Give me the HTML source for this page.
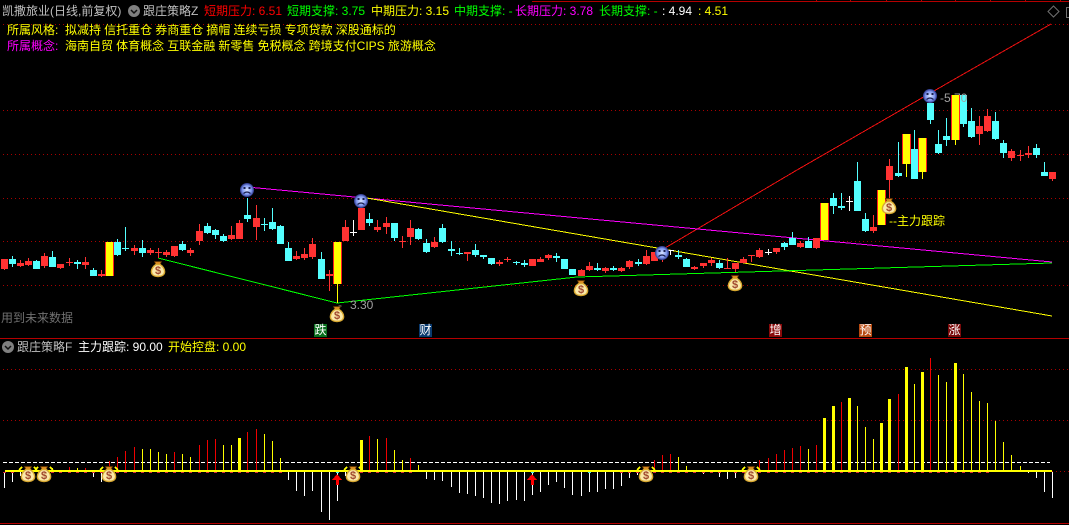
<!DOCTYPE html>
<html><head><meta charset="utf-8"><style>
html,body{margin:0;padding:0;background:#000;width:1069px;height:525px;overflow:hidden}
#w{position:relative;width:1069px;height:525px;background:#000;overflow:hidden;font:12px/14px "Liberation Sans","WenQuanYi Zen Hei","Noto Sans CJK SC",sans-serif}
.t{position:absolute;white-space:pre;line-height:14px;font-size:12px}
.l{position:absolute;width:13px;height:13px;top:324px;color:#fff;text-align:center;line-height:13px;font-size:12px}
svg{position:absolute;left:0;top:0}
</style></head><body><div id="w">
<svg width="1069" height="525" viewBox="0 0 1069 525" shape-rendering="crispEdges" fill="none">
<defs>
<radialGradient id="f"><stop offset="0" stop-color="#d8e4ff"/><stop offset=".65" stop-color="#8098f0"/><stop offset="1" stop-color="#2a3488"/></radialGradient>
<g id="face" shape-rendering="auto"><circle r="7" fill="url(#f)"/><rect x="-3.5" y="-3" width="2" height="2" fill="#1a2050"/><rect x="1.5" y="-3" width="2" height="2" fill="#1a2050"/><path d="M-3.5 3.5Q0 .5 3.5 3.5" stroke="#1a2050" stroke-width="1.3"/></g>
<g id="bag" shape-rendering="auto"><path d="M-3.5 -7.5H3.5L2 -4H-2Z" fill="#d88820" stroke="#5a3000" stroke-width=".8"/><path d="M-2 -4.5C-8 -1 -9 7.5 0 7.5C9 7.5 8 -1 2 -4.5Z" fill="#fbe9a8" stroke="#d8a830" stroke-width="1.4"/><text y="5" text-anchor="middle" font-family="Liberation Sans" font-weight="bold" font-size="11" fill="#a04830">$</text></g>
</defs>
<!-- frame -->
<path d="M532 1.5H1069M0 338.5H1069M0 523.5H1069" stroke="#b40000"/>
<path d="M816.5 0V1M850.5 0V1M886.5 0V1M921.5 0V1M955.5 0V1M990.5 0V1M1025.5 0V1M1060.5 0V1" stroke="#b40000"/>
<!-- grid -->
<path d="M3 24.5H1069M3 110.5H1069M3 154.5H1069M3 198.5H1069M3 241.5H1069M3 285.5H1069M3 369.5H1069M3 420.5H1069M1052 471.5H1069" stroke="#a80000" stroke-dasharray="1 3"/>
<!-- trend lines -->
<path d="M665 248L797 170L953 80L988 60L1051 24" stroke="#f01010"/>
<path d="M247 187L1052 262" stroke="#ff00ff"/>
<path d="M361 197L1052 316" stroke="#ffff00"/>
<path d="M158 258L337 303L577 277L1052 263" stroke="#00ff00"/>
<!-- candle wicks red -->
<path stroke="#ff3232" d="M4.5 259V270M20.5 260V267M28.5 258V266M44.5 253V268M60.5 264V269M69.5 258V266M85.5 257V269M101.5 270V277M134.5 245V255M150.5 248V255M158.5 248V258M166.5 250V257M174.5 246V257M190.5 248V256M199.5 224V245M231.5 226V240M239.5 220V239M256.5 205V240M296.5 251V260M304.5 248V260M312.5 238V259M329.5 270V291M345.5 220V241M377.5 220V232M386.5 217V234M402.5 236V248M410.5 220V245M434.5 237V248M467.5 252V261M499.5 260V266M507.5 257V262M540.5 257V262M548.5 254V260M581.5 269V276M589.5 262V271M605.5 267V273M621.5 267V272M629.5 260V269M646.5 250V265M662.5 250V262M694.5 266V270M703.5 263V268M711.5 258V266M727.5 258V269M735.5 263V272M743.5 257V263M751.5 255V262M759.5 248V258M776.5 248V254M800.5 241V248M816.5 238V249M873.5 215V233M889.5 159V198M979.5 116V145M987.5 109V132M1011.5 149V161M1020.5 150V161M1028.5 146V158M1052.5 172V181"/>
<!-- candle bodies red -->
<path stroke="#ff3232" stroke-width="7" d="M4.5 259V269M20.5 263V266M28.5 261V265M44.5 256V266M60.5 264V268M69.5 262V263M85.5 262V265M101.5 274V276M134.5 248V251M150.5 250V253M158.5 252V253M166.5 252V255M174.5 246V256M190.5 250V253M199.5 231V241M231.5 235V239M239.5 223V239M256.5 218V227M296.5 256V259M304.5 254V258M312.5 244V257M329.5 274V276M345.5 227V241M361.5 208V230M377.5 227V230M386.5 223V227M402.5 241V242M410.5 228V237M434.5 242V247M467.5 252V254M499.5 262V264M507.5 259V260M532.5 259V266M540.5 259V262M548.5 255V258M581.5 270V276M589.5 266V270M605.5 268V271M621.5 268V271M629.5 261V267M646.5 256V264M654.5 252V261M662.5 252V258M694.5 267V269M703.5 263V266M711.5 260V263M727.5 268V269M735.5 263V269M743.5 259V263M751.5 255V256M759.5 250V257M776.5 248V252M800.5 243V247M816.5 238V248M873.5 227V231M889.5 166V180M979.5 126V134M987.5 116V131M1011.5 151V158M1020.5 155V156M1028.5 153V155M1052.5 172V179"/>
<!-- candle wicks cyan -->
<path stroke="#54ffff" d="M12.5 256V267M36.5 260V269M52.5 251V267M77.5 260V269M93.5 268V276M117.5 239V256M125.5 227V251M142.5 240V257M182.5 241V251M207.5 223V234M215.5 229V239M223.5 234V242M247.5 198V222M264.5 218V231M272.5 208V230M280.5 225V244M288.5 242V261M321.5 252V279M369.5 213V226M394.5 223V241M418.5 228V240M426.5 239V253M442.5 224V243M451.5 241V256M459.5 248V255M475.5 244V257M483.5 255V259M491.5 258V265M516.5 261V265M524.5 260V267M556.5 253V262M597.5 263V271M613.5 266V271M638.5 259V266M678.5 250V259M686.5 258V267M719.5 260V269M784.5 242V250M792.5 232V245M808.5 237V248M833.5 193V214M841.5 193V210M857.5 162V211M865.5 213V232M898.5 142V177M914.5 130V179M930.5 103V124M938.5 130V154M946.5 118V146M963.5 95V127M971.5 108V138M995.5 112V140M1003.5 140V158M1036.5 144V158M1044.5 162V176"/>
<!-- candle bodies cyan -->
<path stroke="#54ffff" stroke-width="7" d="M12.5 259V264M36.5 261V269M52.5 257V267M77.5 262V264M93.5 270V276M117.5 242V255M125.5 248V249M142.5 248V253M182.5 244V250M207.5 226V233M215.5 230V235M223.5 236V241M247.5 215V219M264.5 224V225M272.5 222V229M280.5 226V244M288.5 248V261M321.5 259V279M369.5 219V223M394.5 223V238M418.5 229V239M426.5 243V252M442.5 228V242M451.5 249V251M459.5 253V254M475.5 250V255M483.5 255V257M491.5 258V264M516.5 262V263M524.5 263V265M556.5 256V258M564.5 259V269M572.5 269V275M597.5 268V270M613.5 268V270M638.5 262V264M678.5 255V257M686.5 259V267M719.5 263V268M784.5 243V247M792.5 238V245M808.5 241V248M833.5 198V206M841.5 206V208M857.5 181V211M865.5 219V231M898.5 173V176M914.5 149V179M930.5 103V120M938.5 144V153M946.5 136V140M963.5 95V124M971.5 121V137M995.5 121V139M1003.5 143V153M1036.5 148V155M1044.5 172V176"/>
<!-- white doji -->
<path stroke="#fff" d="M353.5 220V236M670.5 250V255M768.5 249V255M849.5 196V211"/>
<path stroke="#fff" stroke-width="7" d="M353.5 232V233M670.5 250V251M768.5 252V253M849.5 201V202"/>
<!-- price labels behind yellow candles -->
<text x="338" y="309" fill="#a0a0a0" font-family="Liberation Sans" font-size="12" shape-rendering="auto">-</text>
<text x="350" y="309" fill="#a0a0a0" font-family="Liberation Sans" font-size="12" shape-rendering="auto">3.30</text>
<text x="940" y="102" fill="#a0a0a0" font-family="Liberation Sans" font-size="12" shape-rendering="auto">-5.70</text>
<!-- yellow candles -->
<path stroke="#ffff00" d="M337.5 284V303M906.5 164V177M922.5 172V179M955.5 140V145"/>
<path fill="#ff1e1e" d="M105 242h9v34h-9zM333 242h9v42h-9zM820 203h9v37h-9zM877 190h9v35h-9zM902 134h9v30h-9zM918 138h9v34h-9zM951 95h9v45h-9z"/>
<path fill="#ffff00" d="M106 242h7v34h-7zM334 242h7v42h-7zM821 203h7v37h-7zM878 190h7v35h-7zM903 134h7v30h-7zM919 138h7v34h-7zM952 95h7v45h-7z"/>
<!-- faces -->
<use href="#face" x="247" y="190"/><use href="#face" x="361" y="201"/><use href="#face" x="662" y="253"/><use href="#face" x="930" y="96"/>
<!-- bags upper -->
<use href="#bag" x="158" y="269"/><use href="#bag" x="337" y="314"/><use href="#bag" x="581" y="288"/><use href="#bag" x="735" y="283"/><use href="#bag" x="889" y="206"/>
<!-- lower panel -->
<path stroke="#fff" stroke-dasharray="4 2" d="M3 462.5H1050"/>
<path stroke="#fff" d="M4.5 472V488M12.5 472V482M20.5 472V476M93.5 472V477M101.5 472V482M288.5 472V480M296.5 472V491M304.5 472V496M312.5 472V491M321.5 472V512M329.5 472V520M337.5 472V501M345.5 472V476M426.5 472V479M434.5 472V480M442.5 472V481M451.5 472V487M459.5 472V493M467.5 472V494M475.5 472V496M483.5 472V498M491.5 472V503M499.5 472V504M507.5 472V501M516.5 472V500M524.5 472V501M532.5 472V495M540.5 472V492M548.5 472V485M556.5 472V482M564.5 472V488M572.5 472V495M581.5 472V496M589.5 472V492M597.5 472V492M605.5 472V489M613.5 472V489M621.5 472V486M629.5 472V478M637.5 472V475M703.5 472V474M719.5 472V477M727.5 472V479M735.5 472V478M1028.5 472V473M1036.5 472V478M1044.5 472V492M1052.5 472V498"/>
<path stroke="#ffff00" d="M52.5 468V470M77.5 468V470M142.5 449V470M150.5 449V470M158.5 452V470M166.5 454V470M182.5 454V470M190.5 457V470M223.5 445V470M231.5 445V470M264.5 434V470M272.5 441V470M280.5 458V470M377.5 439V470M394.5 450V470M402.5 460V470M418.5 465V470M678.5 457V470M686.5 466V470M808.5 449V470M857.5 406V470M865.5 427V470M873.5 439V470M914.5 384V470M938.5 375V470M946.5 382V470M963.5 374V470M971.5 392V470M979.5 401V470M987.5 403V470M995.5 421V470M1003.5 442V470M1011.5 455V470M1020.5 466V470"/>
<path stroke="#f00000" d="M69.5 467V470M85.5 468V470M109.5 461V470M117.5 457V470M125.5 451V470M134.5 447V470M174.5 452V470M199.5 445V470M207.5 440V470M215.5 439V470M247.5 432V470M256.5 429V470M369.5 436V470M386.5 438V470M410.5 458V470M654.5 460V470M662.5 455V470M670.5 454V470M759.5 460V470M768.5 458V470M776.5 454V470M784.5 450V470M792.5 448V470M800.5 446V470M816.5 445V470M841.5 402V470M898.5 394V470M930.5 358V470"/>
<path fill="#ffff00" d="M238 438h3v32h-3zM360 440h3v30h-3zM823 418h3v52h-3zM832 406h3v64h-3zM848 398h3v72h-3zM880 423h3v47h-3zM888 399h3v71h-3zM905 367h3v103h-3zM921 372h3v98h-3zM954 363h3v107h-3z"/>
<path fill="#ffff00" d="M5 470H1052V472H5z"/>
<path stroke="#d8283c" stroke-width="3" d="M4.5 472V473M12.5 472V473M52.5 472V473M60.5 472V473M69.5 472V473M77.5 472V473M85.5 472V473M93.5 472V473M101.5 472V473M109.5 472V473M117.5 472V473M125.5 472V473M134.5 472V473M142.5 472V473M150.5 472V473M158.5 472V473M166.5 472V473M174.5 472V473M182.5 472V473M190.5 472V473M199.5 472V473M207.5 472V473M215.5 472V473M223.5 472V473M231.5 472V473M239.5 472V473M247.5 472V473M256.5 472V473M264.5 472V473M272.5 472V473M280.5 472V473M361.5 472V473M369.5 472V473M377.5 472V473M386.5 472V473M394.5 472V473M402.5 472V473M410.5 472V473M621.5 472V473M629.5 472V473M637.5 472V473M654.5 472V473M662.5 472V473M670.5 472V473M678.5 472V473M686.5 472V473M694.5 472V473M703.5 472V473M711.5 472V473M719.5 472V473M735.5 472V473M743.5 472V473M759.5 472V473M768.5 472V473M776.5 472V473M784.5 472V473M792.5 472V473M800.5 472V473M808.5 472V473M816.5 472V473M824.5 472V473M833.5 472V473M841.5 472V473M849.5 472V473M857.5 472V473M865.5 472V473M873.5 472V473M881.5 472V473M889.5 472V473M898.5 472V473M906.5 472V473M914.5 472V473M922.5 472V473M930.5 472V473M938.5 472V473M946.5 472V473M955.5 472V473M963.5 472V473M971.5 472V473M979.5 472V473M987.5 472V473"/>
<path stroke="#40e8e8" stroke-width="3" d="M337.5 472V473M532.5 472V473M589.5 472V473"/>
<!-- arrows -->
<path fill="#ff0000" d="M337 474L342 480H339V485H336V480H332ZM532 474L537 480H534V485H531V480H527Z"/>
<!-- wings beside lower bags -->
<path stroke="#ffff00" stroke-width="2" d="M19 470L22 467M34 467L37 470M35 470L38 467M50 467L53 470M100 470L103 467M115 467L118 470M344 470L347 467M359 467L362 470M637 470L640 467M652 467L655 470M742 470L745 467M757 467L760 470"/>
<!-- bags lower -->
<use href="#bag" x="28" y="474"/><use href="#bag" x="44" y="474"/><use href="#bag" x="109" y="474"/><use href="#bag" x="353" y="474"/><use href="#bag" x="646" y="474"/><use href="#bag" x="751" y="474"/>
<!-- header icons -->
<g shape-rendering="auto">
<circle cx="134" cy="11" r="6" fill="#808080"/><path d="M131 10L134 13L137 10" stroke="#111" stroke-width="1.5"/>
<circle cx="8" cy="347" r="6" fill="#808080"/><path d="M5 346L8 349L11 346" stroke="#111" stroke-width="1.5"/>
<path d="M1053.5 6L1059 11.5L1053.5 17L1048 11.5Z" stroke="#707070"/>
</g>
<path d="M1069 7.5H1066.5V17.5H1069" stroke="#707070"/>
</svg>
<div class="t" style="left:2px;top:4px;color:#c0c0c0">凯撒旅业(日线,前复权)</div>
<div class="t" style="left:143px;top:4px;color:#c0c0c0">跟庄策略Z</div>
<div class="t" style="left:204px;top:4px;color:#ff0000">短期压力: 6.51</div>
<div class="t" style="left:287px;top:4px;color:#00ff00">短期支撑: 3.75</div>
<div class="t" style="left:371px;top:4px;color:#ffff00">中期压力: 3.15</div>
<div class="t" style="left:454px;top:4px;color:#00ff00">中期支撑: -</div>
<div class="t" style="left:515px;top:4px;color:#ff00ff">长期压力: 3.78</div>
<div class="t" style="left:599px;top:4px;color:#00ff00">长期支撑: -</div>
<div class="t" style="left:662px;top:4px;color:#fff">: 4.94</div>
<div class="t" style="left:698px;top:4px;color:#ffff00">: 4.51</div>
<div class="t" style="left:7px;top:23px;color:#ffff00">所属风格:</div>
<div class="t" style="left:65px;top:23px;color:#ffff00;word-spacing:-.2px">拟减持 信托重仓 券商重仓 摘帽 连续亏损 专项贷款 深股通标的</div>
<div class="t" style="left:7px;top:39px;color:#ff00ff">所属概念:</div>
<div class="t" style="left:65px;top:39px;color:#ffff00;word-spacing:-.2px">海南自贸 体育概念 互联金融 新零售 免税概念 跨境支付CIPS 旅游概念</div>
<div class="t" style="left:1px;top:311px;color:#707070">用到未来数据</div>
<div class="t" style="left:889px;top:214px;color:#ffff00">--主力跟踪</div>
<div class="l" style="left:314px;background:#0a6e1e">跌</div>
<div class="l" style="left:419px;background:#0a3a6e">财</div>
<div class="l" style="left:769px;background:#8a0a0a">增</div>
<div class="l" style="left:859px;background:#b84a10">预</div>
<div class="l" style="left:948px;background:#7a0a0a">涨</div>
<div class="t" style="left:17px;top:340px;color:#c0c0c0">跟庄策略F</div>
<div class="t" style="left:78px;top:340px;color:#fff">主力跟踪: 90.00</div>
<div class="t" style="left:168px;top:340px;color:#ffff00">开始控盘: 0.00</div>
</div></body></html>
